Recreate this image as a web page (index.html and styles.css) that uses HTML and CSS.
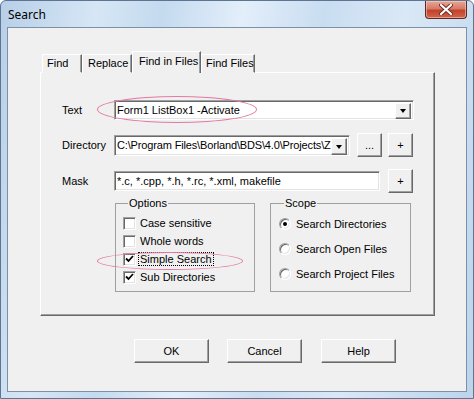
FILE: index.html
```html
<!DOCTYPE html>
<html lang="en">

<head>
	<meta charset="UTF-8">
	<title>Search</title>
	<link rel="stylesheet" href="styles.css">
</head>

<body>
	<div id="win">
		<div class="titlebar">
			<span class="title">Search</span>
			<span class="closeBtn">
				<svg width="14" height="11" viewBox="0 0 14 11">
					<path d="M2 1 L12 10 M12 1 L2 10" stroke="#6b2a22" stroke-width="4" stroke-linecap="round" />
					<path d="M2 1 L12 10 M12 1 L2 10" stroke="#fff" stroke-width="2.2" stroke-linecap="round" />
				</svg>
			</span>
		</div>
		<div class="client">
			<div class="tabs">
				<div class="tab tabFind">Find</div>
				<div class="tab tabReplace">Replace</div>
				<div class="tab active">Find in Files</div>
				<div class="tab tabFiles">Find Files</div>
			</div>
			<div class="page">
				<div class="row rowText">
					<span class="label">Text</span>
					<div class="combo comboText">
						<span class="value">Form1 ListBox1 -Activate</span>
						<span class="drop"><i></i></span>
					</div>
				</div>
				<div class="row rowDir">
					<span class="label">Directory</span>
					<div class="combo comboDir">
						<span class="value">C:\Program Files\Borland\BDS\4.0\Projects\Z</span>
						<span class="drop"><i></i></span>
					</div>
					<button class="btn small browse">...</button>
					<button class="btn small plus">+</button>
				</div>
				<div class="row rowMask">
					<span class="label">Mask</span>
					<div class="edit">
						<span class="value">*.c, *.cpp, *.h, *.rc, *.xml, makefile</span>
					</div>
					<button class="btn small plusMask">+</button>
				</div>
				<div class="groups">
					<fieldset class="group options">
						<legend>Options</legend>
						<label class="check"><span class="box"></span><span>Case sensitive</span></label>
						<label class="check"><span class="box"></span><span>Whole words</span></label>
						<label class="check"><span class="box on"><svg width="9" height="8" viewBox="0 0 9 8"><path d="M1 3.5 L3.5 6 L8 1" fill="none" stroke="#000" stroke-width="1.8" /></svg></span><span class="focus">Simple Search</span></label>
						<label class="check"><span class="box on"><svg width="9" height="8" viewBox="0 0 9 8"><path d="M1 3.5 L3.5 6 L8 1" fill="none" stroke="#000" stroke-width="1.8" /></svg></span><span>Sub Directories</span></label>
					</fieldset>
					<fieldset class="group scope">
						<legend>Scope</legend>
						<label class="radio"><span class="dot on"></span><span>Search Directories</span></label>
						<label class="radio"><span class="dot"></span><span>Search Open Files</span></label>
						<label class="radio"><span class="dot"></span><span>Search Project Files</span></label>
					</fieldset>
				</div>
				<span class="ring ringText"></span>
				<span class="ring ringSimple"></span>
			</div>
			<div class="buttons">
				<button class="btn big">OK</button>
				<button class="btn big">Cancel</button>
				<button class="btn big">Help</button>
			</div>
		</div>
	</div>
</body>

</html>
```

FILE: styles.css
```css
* {
	margin: 0;
	padding: 0;
	box-sizing: border-box;
}
body {
	width: 474px;
	height: 399px;
	overflow: hidden;
	font-family: "Liberation Sans", Arial, sans-serif;
	font-size: 11px;
	color: #000;
}
div#win {
	width: 474px;
	height: 399px;
	border: 1px solid #5d7590;
	border-radius: 6px 6px 0 0;
	padding: 0 6px 6px 6px;
	background: linear-gradient(100deg, #b7cfe8 0%, #d6e6f5 18%, #c4daef 30%, #e3eefa 45%, #c9ddf1 60%, #d9e8f6 75%, #bcd4ec 100%);
	display: flex;
	flex-direction: column;
}
.titlebar {
	height: 26px;
	display: flex;
	justify-content: space-between;
	align-items: flex-start;
}
.title {
	font-family: "Noto Sans", sans-serif;
	font-size: 12px;
	padding: 5px 0 0 1px;
	color: #000;
}
.closeBtn {
	width: 42px;
	height: 18px;
	border: 1px solid #5a2b25;
	border-top: 0;
	border-radius: 0 0 4px 4px;
	background: linear-gradient(#e9a795 0%, #d77a66 45%, #c0432b 55%, #d5644a 100%);
	box-shadow: inset 0 0 0 1px rgba(255, 220, 210, 0.5);
	display: flex;
	justify-content: center;
	align-items: center;
}
.client {
	flex: 1;
	border: 1px solid #7d90a6;
	background: #f0f0f0;
	padding: 23px 0 0 32px;
}
.tabs {
	display: flex;
	align-items: flex-end;
	height: 22px;
	margin: 0 0 -1px 2px;
	position: relative;
	z-index: 1;
}
.tab {
	height: 19px;
	padding: 2px 0 0 4px;
	border: 1px solid;
	border-color: #fff #696969 transparent #fff;
	box-shadow: inset -1px 0 #a0a0a0;
	background: #f0f0f0;
	white-space: nowrap;
}
.tabFind {
	width: 40px;
}
.tabReplace {
	width: 50px;
	padding-left: 5px;
}
.tab.active {
	width: 69px;
	height: 22px;
	padding: 3px 0 0 6px;
	border-bottom: 0;
}
.tabFiles {
	width: 54px;
}
.page {
	position: relative;
	width: 395px;
	height: 244px;
	border: 1px solid;
	border-color: #fff #696969 #696969 #fff;
	box-shadow: inset -1px -1px #a0a0a0;
	padding: 26px 0 0 21px;
}
.row {
	display: flex;
	align-items: center;
}
.label {
	width: 52px;
}
.rowText {
	height: 21px;
	margin-bottom: 13px;
}
.rowDir {
	height: 24px;
	margin-bottom: 12px;
}
.rowMask {
	height: 24px;
}
.combo, .edit {
	position: relative;
	height: 20px;
	border: 1px solid;
	border-color: #a0a0a0 #fff #fff #a0a0a0;
	box-shadow: inset 1px 1px #696969, inset -1px -1px #e3e3e3;
	background: #fff;
	display: flex;
	align-items: center;
	overflow: hidden;
	white-space: nowrap;
}
.value {
	padding-left: 2px;
}
.comboText {
	width: 300px;
}
.comboDir {
	width: 236px;
	height: 21px;
}
.comboDir .value {
	letter-spacing: -0.15px;
}
.edit {
	width: 266px;
}
.drop {
	position: absolute;
	right: 2px;
	top: 2px;
	width: 16px;
	height: 16px;
	background: #f0f0f0;
	border: 1px solid;
	border-color: #fff #696969 #696969 #fff;
	box-shadow: inset -1px -1px #a0a0a0;
	display: flex;
	justify-content: center;
	align-items: center;
}
.comboDir .drop {
	height: 17px;
}
.drop i {
	width: 0;
	height: 0;
	border-left: 3.5px solid transparent;
	border-right: 3.5px solid transparent;
	border-top: 4px solid #000;
	margin-top: 1px;
}
.btn {
	font: inherit;
	color: #000;
	background: #f0f0f0;
	border: 1px solid;
	border-color: #fff #696969 #696969 #fff;
	box-shadow: inset -1px -1px #a0a0a0;
}
.btn.small {
	width: 25px;
	height: 24px;
}
.browse {
	margin-left: 7px;
}
.plus {
	margin-left: 6px;
}
.plusMask {
	margin-left: 8px;
}
.groups {
	display: flex;
	gap: 15px;
	margin: 4px 0 0 53px;
}
fieldset.group {
	border: 1px solid #a0a0a0;
	height: 95px;
	min-width: 0;
}
.group legend {
	line-height: 13px;
	padding: 0 1px;
	margin-left: 5px;
}
.options {
	width: 140px;
	padding: 4px 0 0 7px;
}
.scope {
	width: 141px;
	padding: 1px 0 0 8px;
}
.check {
	display: flex;
	align-items: center;
	height: 18px;
}
.box {
	width: 13px;
	height: 13px;
	margin-right: 4px;
	border: 1px solid;
	border-color: #a0a0a0 #fff #fff #a0a0a0;
	box-shadow: inset 1px 1px #696969, inset -1px -1px #e3e3e3;
	background: #fff;
	display: flex;
	justify-content: center;
	align-items: center;
}
.focus {
	outline: 1px dotted #000;
	padding: 0 1px;
	margin-left: -1px;
}
.radio {
	display: flex;
	align-items: center;
	height: 25px;
}
.dot {
	width: 12px;
	height: 12px;
	margin-right: 5px;
	border-radius: 50%;
	border: 1px solid;
	border-color: #a0a0a0 #fff #fff #a0a0a0;
	box-shadow: inset 1px 1px #696969, inset -1px -1px #e3e3e3;
	background: #fff;
	display: flex;
	justify-content: center;
	align-items: center;
}
.dot.on::after {
	content: '';
	width: 4px;
	height: 4px;
	border-radius: 50%;
	background: #000;
}
.ring {
	position: absolute;
	border: 1px solid #e27aa4;
	border-radius: 50%;
	pointer-events: none;
}
.ringText {
	left: 56px;
	top: 23px;
	width: 160px;
	height: 27px;
}
.ringSimple {
	left: 56px;
	top: 179px;
	width: 146px;
	height: 18px;
}
.buttons {
	display: flex;
	gap: 18px;
	margin: 23px 0 0 94px;
}
.btn.big {
	width: 75px;
	height: 24px;
}
.btn.big + .btn.big + .btn.big {
	margin-left: 1px;
}
```
